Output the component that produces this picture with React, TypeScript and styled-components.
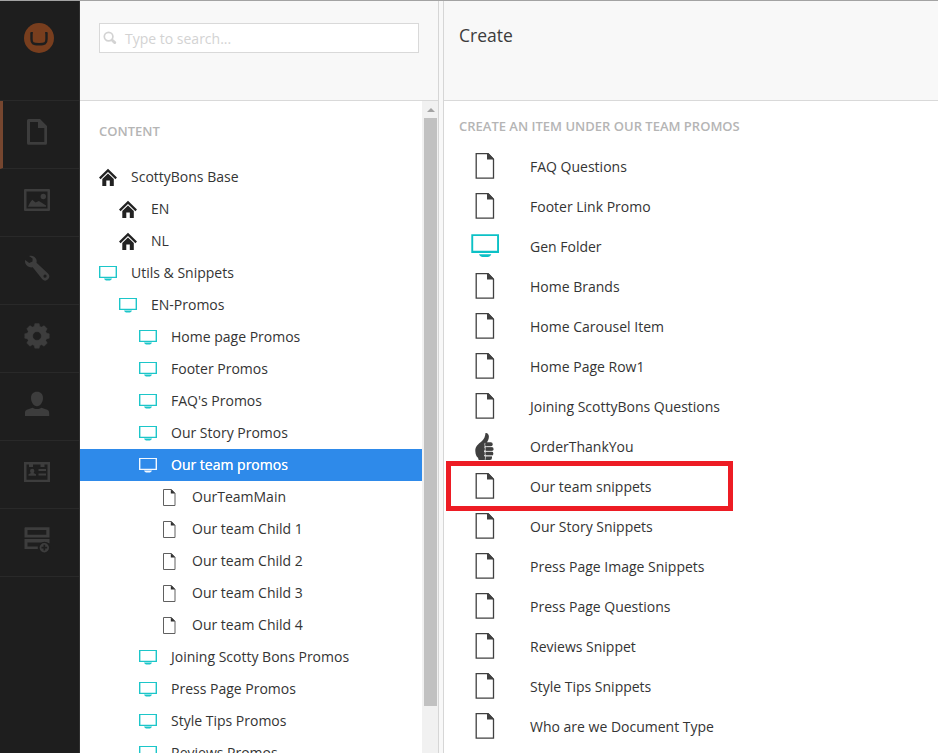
import React from "react";
import styled, { createGlobalStyle, css } from "styled-components";

const Global = createGlobalStyle`
  * { box-sizing: border-box; }
  html, body { margin: 0; padding: 0; overflow: hidden; }
  body { font-family: "Open Sans", sans-serif; font-size: 14px; color: #343434; background: #fff; }
`;

const Shell = styled.div`
  display: flex;
  height: 753px;
  border-top: 1px solid #a3a3a3;
  overflow: hidden;
`;

const NavRail = styled.nav`
  width: 80px;
  flex: none;
  background: #1e1e1e;
  border-right: 1px solid #303030;
`;

const LogoArea = styled.div`
  height: 100px;
  padding: 22px 0 0 24px;
  border-bottom: 1px solid #292929;
  svg { display: block; }
`;

const NavItem = styled.div<{ $active?: boolean }>`
  height: 68px;
  padding: 16px 0 0 ${(p) => (p.$active ? 19 : 22)}px;
  border-bottom: 1px solid #292929;
  ${(p) => p.$active && css`border-left: 3px solid #76462f;`}
  svg { display: block; }
`;

const TreePanel = styled.section`
  width: 359px;
  flex: none;
  display: flex;
  flex-direction: column;
  border-right: 1px solid #d6d6d6;
`;

const Header = styled.header`
  height: 100px;
  flex: none;
  padding: 22px 19px 0;
  background: #f8f8f8;
  border-bottom: 1px solid #d9d9d9;
`;

const SearchBox = styled.div`
  display: flex;
  align-items: center;
  height: 30px;
  padding-left: 3px;
  gap: 8px;
  background: #fff;
  border: 1px solid #d9d9d9;
  color: #d3d3d3;
`;

const Body = styled.div`
  display: flex;
  flex: 1;
  min-height: 0;
`;

const Tree = styled.div`
  flex: 1;
  overflow: hidden;
`;

const SectionTitle = styled.h5`
  margin: 0;
  font-size: 13px;
  font-weight: 600;
  line-height: 20px;
  color: #b5b5b5;
  white-space: nowrap;
`;

const TreeTitle = styled(SectionTitle)`
  padding: 20px 0 20px 19px;
`;

const TreeRow = styled.div<{ $indent: number; $selected?: boolean }>`
  display: flex;
  align-items: center;
  gap: 14px;
  height: 32px;
  padding-left: ${(p) => p.$indent}px;
  line-height: 20px;
  white-space: nowrap;
  ${(p) => p.$selected && css`
    background: #2e8aea;
    color: #fff;
    text-shadow: 0 0 0.5px #fff;
  `}
  svg { flex: none; }
`;

const ScrollTrack = styled.div`
  width: 16px;
  flex: none;
  padding: 7px 1px 0 2px;
  background: #f1f1f1;
  svg { display: block; margin: 0 auto 6px 3px; }
`;

const ScrollThumb = styled.div`
  height: 588px;
  background: #c1c1c1;
`;

const Splitter = styled.div`
  width: 5px;
  flex: none;
  background: #f8f8f8;
  border-right: 1px solid #d6d6d6;
`;

const CreatePanel = styled.section`
  flex: 1;
  min-width: 0;
`;

const CreateHeader = styled(Header)`
  padding: 22px 15px 0;
`;

const Heading = styled.h1`
  margin: 0;
  font-size: 17.5px;
  line-height: 25px;
  font-weight: 400;
  color: #3c3c3c;
`;

const CreateTitle = styled(SectionTitle)`
  padding: 15px 0 11px 15px;
`;

const CreateRow = styled.div`
  position: relative;
  display: flex;
  align-items: center;
  gap: 30px;
  height: 40px;
  padding-left: 26px;
  white-space: nowrap;
  svg { flex: none; }
`;

const TypeLabel = styled.span`
  line-height: 20px;
`;

const Highlight = styled.div`
  position: absolute;
  left: 2px;
  top: -6px;
  width: 287px;
  height: 50px;
  border: 5px solid #ed1c24;
`;

const Logo = () => (
  <svg width="30" height="30" viewBox="0 0 30 30">
    <circle cx="15" cy="15" r="15" fill="#783e1e" />
    <path d="M7.500 9.500v6.500c0 4.300 1.300 5.300 7.500 5.300s7.500-1 7.500-5.300V9.500" fill="none" stroke="#1e1e1e" strokeWidth="2.400" />
    <path d="M6.800 9.800h2M21.200 9.800h2" stroke="#1e1e1e" strokeWidth="1.500" />
  </svg>
);

const NavSvg = ({ children }: { children: React.ReactNode }) => (
  <svg width="30" height="30" viewBox="0 0 30 30" fill="#3d3d3d">{children}</svg>
);

const navIcons: React.ReactNode[] = [
  <NavSvg key="doc">
    <path fillRule="evenodd" d="M6.500 2H18l7 7v17.200q0 1.500-1.500 1.500H6.500Q5 27.700 5 26.200V3.500Q5 2 6.500 2ZM8 5v20h14.300V11H16V5Z" />
  </NavSvg>,
  <NavSvg key="image">
    <path fillRule="evenodd" d="M3 4h24q1 0 1 1v20q0 1-1 1H3q-1 0-1-1V5q0-1 1-1ZM4.500 6.500v17h21v-17Z" />
    <circle cx="21.300" cy="11.500" r="2.700" />
    <path d="M6 21.800c1-2.500 2.500-5 4.300-7l3.200 2.600 3.400-1.300 7.100 4.400v1.300Z" />
  </NavSvg>,
  <NavSvg key="wrench">
    <path fillRule="evenodd" d="M7 3c3-1 6.300.5 7.400 3.500.4 1.200.4 2.200.1 3.300L26 20.500a4 4 0 0 1-5.700 5.700L10.700 14.300c-3.200.6-6.500-1-7.500-4.200-.3-1-.3-2 0-3l4 2.900 3.300-1.500.1-3ZM23 21.500a1.600 1.600 0 1 0 .1 3.200 1.600 1.600 0 0 0-.1-3.200Z" />
  </NavSvg>,
  <NavSvg key="gear">
    <path fillRule="evenodd" d="M12.800 2.600h4.400l.7 2.800 1.700.7 2.500-1.500 3.200 3.200-1.500 2.500.7 1.700 2.800.8v4.400l-2.800.7-.7 1.700 1.500 2.500-3.200 3.200-2.500-1.500-1.700.7-.7 2.800h-4.400l-.7-2.800-1.700-.7-2.500 1.500-3.200-3.200 1.500-2.500-.7-1.700-2.800-.7v-4.400l2.800-.8.7-1.700-1.500-2.500 3.200-3.200 2.500 1.500 1.700-.7ZM15 10.700a4.300 4.300 0 1 0 0 8.600 4.300 4.300 0 0 0 0-8.600Z" strokeLinejoin="round" stroke="#3d3d3d" strokeWidth=".4" />
  </NavSvg>,
  <NavSvg key="user">
    <path d="M15 2.800c3.800 0 6 2.500 6 6.200 0 3.900-2.500 8.300-6 8.300S9 12.900 9 9c0-3.700 2.200-6.200 6-6.200Z" />
    <path d="M3 27v-2.500c0-3 .8-3.600 3.300-4.300l4.200-1.500c2.500 1.700 6.500 1.700 9 0l4.200 1.500c2.500.7 3.500 1.300 3.500 4.300V27Z" />
  </NavSvg>,
  <NavSvg key="card">
    <path fillRule="evenodd" d="M3 5h25v20H2V5ZM4.500 7.500v15.200h21V7.500Z" />
    <path d="M7 7h4v3H7ZM18.500 7h4v3h-4ZM16.500 12h7.500v2h-7.500ZM16.500 16.500H24v2h-7.500ZM6.500 18.800v-1.600l3-1.400h1.500l3 1.400v1.600Z" />
    <circle cx="10.200" cy="14" r="2.200" />
  </NavSvg>,
  <NavSvg key="stack">
    <path fillRule="evenodd" d="M3 2.300h24.500v10.200H2.500V3ZM5.500 5v4.800h18.800V5Z" />
    <path d="M2.500 14h25v4.500l-2.500-1H5.500v4h10.300V24H2.500Z" />
    <circle cx="22.500" cy="22.500" r="5.700" fill="#1e1e1e" />
    <path fillRule="evenodd" d="M22.300 18a4.700 4.700 0 1 0 0 9.400 4.700 4.700 0 0 0 0-9.400ZM21.500 19.800h1.700v2h2v1.700h-2v2h-1.700v-2h-2v-1.700h2Z" />
  </NavSvg>,
];

const SearchIcon = () => (
  <svg width="14" height="14" viewBox="0 0 14 14" fill="none" stroke="#d3d3d3">
    <circle cx="5.600" cy="5.600" r="4.300" strokeWidth="1.700" />
    <path d="M9.200 9.200l2.600 2.400" strokeWidth="2.800" strokeLinecap="round" />
  </svg>
);

const HouseIcon = () => (
  <svg width="18" height="18" viewBox="0 0 18 18">
    <path d="M.8 10.400 9 2.400l8.200 8" fill="none" stroke="#222" strokeWidth="2.200" />
    <path d="M9 5.500l5.800 5.500V18h-4v-5.600H7.300V18h-4v-7Z" fill="#222" />
  </svg>
);

const MonitorIcon = ({ light }: { light?: boolean }) => (
  <svg width="18" height="18" viewBox="0 0 18 18" fill={light ? "#f2f8ff" : "#1cc6c9"}>
    <path fillRule="evenodd" d="M0 2h18v12H0ZM1.400 3v9.800h15.200V3Z" />
    <path d="M5 14.600h8q-.5 1.800-2 1.800H7q-1.500 0-2-1.800Z" />
  </svg>
);

const SmallDocIcon = () => (
  <svg width="18" height="18" viewBox="0 0 18 18">
    <path d="M3.500 1.500h8l3.500 3.700v12.300H3.500Z" fill="none" stroke="#606060" />
    <path d="M10.800 1.200v4.300h4.400Z" fill="#303030" />
  </svg>
);

const BigDocIcon = () => (
  <svg width="30" height="30" viewBox="0 0 30 30">
    <path d="M6.200 1.600h12l5.300 5.600v19H6.200Z" fill="none" stroke="#404040" strokeWidth="1.300" />
    <path d="M17 1.500v6h6.600v-1L18.600 1.500Z" fill="#404040" />
  </svg>
);

const BigMonitorIcon = () => (
  <svg width="30" height="30" viewBox="0 0 30 30" fill="#0cc1c6">
    <path fillRule="evenodd" d="M1.300 2.200H29V21H1.300ZM3.200 4v14.800h23.900V4Z" />
    <path d="M9 22.300h12.300c-.8 1.700-2 2.700-3.500 2.700h-5.300c-1.500 0-2.700-1-3.500-2.700Z" />
  </svg>
);

const ThumbIcon = () => (
  <svg width="30" height="30" viewBox="0 0 30 30" fill="#404040">
    <path d="M15.500 1c1.800-.5 3.200 1.300 3.400 3.300.2 2.700-1.500 5.300-2.300 7-1 2-2 2.800-2.500 4.500V28H8.700L8 25.700c-1.600-1.200-2.500-3-2.700-6.700C5.100 14.500 8 12.200 12 9c2.300-2 3.200-5 3.500-8Z" />
    <rect x="13.500" y="10.200" width="9.200" height="4.200" rx="1.800" />
    <rect x="14" y="15.100" width="9.500" height="3.800" rx="1.700" />
    <rect x="14" y="19.600" width="9.300" height="4" rx="1.700" />
    <path d="M12.500 24.300h9.500v1.500q0 2.200-2 2.200h-7.500Z" />
    <path d="M16.400 14.700h6M15.600 19.300h7M15.600 23.900h6.500M15 10.900q-1 2 .7 4.200-1.200 2 0 4.200-1.200 2 0 4.600l-.5 4" stroke="#fff" strokeWidth=".6" fill="none" />
  </svg>
);

type Kind = "house" | "monitor" | "doc";
const tree: { label: string; kind: Kind; indent: number; selected?: boolean }[] = [
  { label: "ScottyBons Base", kind: "house", indent: 19 },
  { label: "EN", kind: "house", indent: 39 },
  { label: "NL", kind: "house", indent: 39 },
  { label: "Utils & Snippets", kind: "monitor", indent: 19 },
  { label: "EN-Promos", kind: "monitor", indent: 39 },
  { label: "Home page Promos", kind: "monitor", indent: 59 },
  { label: "Footer Promos", kind: "monitor", indent: 59 },
  { label: "FAQ's Promos", kind: "monitor", indent: 59 },
  { label: "Our Story Promos", kind: "monitor", indent: 59 },
  { label: "Our team promos", kind: "monitor", indent: 59, selected: true },
  { label: "OurTeamMain", kind: "doc", indent: 80 },
  { label: "Our team Child 1", kind: "doc", indent: 80 },
  { label: "Our team Child 2", kind: "doc", indent: 80 },
  { label: "Our team Child 3", kind: "doc", indent: 80 },
  { label: "Our team Child 4", kind: "doc", indent: 80 },
  { label: "Joining Scotty Bons Promos", kind: "monitor", indent: 59 },
  { label: "Press Page Promos", kind: "monitor", indent: 59 },
  { label: "Style Tips Promos", kind: "monitor", indent: 59 },
  { label: "Reviews Promos", kind: "monitor", indent: 59 },
];

const types = [
  "FAQ Questions", "Footer Link Promo", "Gen Folder", "Home Brands", "Home Carousel Item",
  "Home Page Row1", "Joining ScottyBons Questions", "OrderThankYou", "Our team snippets",
  "Our Story Snippets", "Press Page Image Snippets", "Press Page Questions", "Reviews Snippet",
  "Style Tips Snippets", "Who are we Document Type",
];

const TreeIcon = ({ kind, light }: { kind: Kind; light?: boolean }) =>
  kind === "house" ? <HouseIcon /> : kind === "doc" ? <SmallDocIcon /> : <MonitorIcon light={light} />;

const TypeIcon = ({ name }: { name: string }) =>
  name === "Gen Folder" ? <BigMonitorIcon /> : name === "OrderThankYou" ? <ThumbIcon /> : <BigDocIcon />;

export default function App() {
  return (
    <>
      <Global />
      <Shell>
        <NavRail>
          <LogoArea><Logo /></LogoArea>
          {navIcons.map((icon, i) => (
            <NavItem key={i} $active={i === 0}>{icon}</NavItem>
          ))}
        </NavRail>
        <TreePanel>
          <Header>
            <SearchBox><SearchIcon /><span>Type to search...</span></SearchBox>
          </Header>
          <Body>
            <Tree>
              <TreeTitle>CONTENT</TreeTitle>
              {tree.map((n) => (
                <TreeRow key={n.label} $indent={n.indent} $selected={n.selected}>
                  <TreeIcon kind={n.kind} light={n.selected} />
                  <span>{n.label}</span>
                </TreeRow>
              ))}
            </Tree>
            <ScrollTrack>
              <svg width="8" height="4" viewBox="0 0 8 4"><path d="M0 4 4 0l4 4Z" fill="#a3a3a3" /></svg>
              <ScrollThumb />
            </ScrollTrack>
          </Body>
        </TreePanel>
        <Splitter />
        <CreatePanel>
          <CreateHeader><Heading>Create</Heading></CreateHeader>
          <CreateTitle>CREATE AN ITEM UNDER OUR TEAM PROMOS</CreateTitle>
          {types.map((t) => (
            <CreateRow key={t}>
              <TypeIcon name={t} />
              <TypeLabel>{t}</TypeLabel>
              {t === "Our team snippets" && <Highlight />}
            </CreateRow>
          ))}
        </CreatePanel>
      </Shell>
    </>
  );
}
